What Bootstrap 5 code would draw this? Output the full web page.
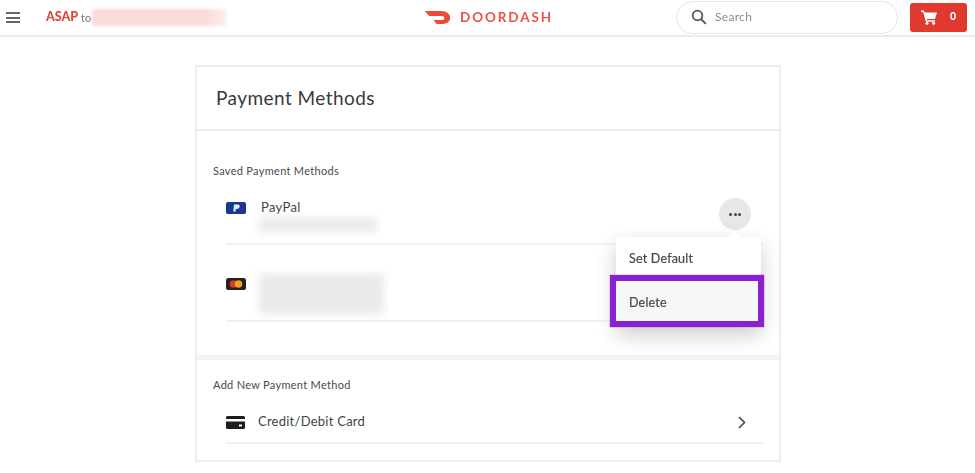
<!DOCTYPE html>
<html lang="en">
<head>
<meta charset="utf-8">
<title>Payment Methods</title>
<link rel="stylesheet" href="https://cdn.jsdelivr.net/npm/bootstrap@5.3.0/dist/css/bootstrap.min.css">
<style>
html,body{height:473px;overflow:hidden;background:#fff}
body{font-family:Lato,"Liberation Sans",sans-serif;color:#494949}
.topbar,.paycard{filter:blur(.4px)}
.topbar{height:37px;border-bottom:2px solid #ececec;padding:0 6px 0 6px}
.topbar>*{flex:none}
.burger{width:14px;height:11px;margin-right:26px;border-top:2px solid #666;border-bottom:2px solid #666;position:relative}
.burger::after{content:"";position:absolute;left:0;right:0;top:2.5px;height:2px;background:#666}
.asap{font-size:12.5px;font-weight:900;color:#e2443a;line-height:1}
.asap-to{font-size:11px;color:#777;margin:0 1px 0 3px;line-height:1}
.addr-blur{width:135px;height:17px;background:linear-gradient(90deg,#f9dcd9 85%,#fdf1ef);filter:blur(1.5px)}
.addr-wrap{width:378px}
.brand-wrap{width:253px}
.brand-name{font-size:13.5px;font-weight:700;letter-spacing:1.9px;color:#eb5146;margin-left:8px;line-height:1}
.searchbox{width:222px;height:33px;border:1px solid #e4e4e4;border-radius:17px;padding-left:14px;font-size:12px;color:#8b8b8b;letter-spacing:.3px;margin-left:-1px;margin-top:-1px}
.searchbox svg{margin-right:8px}
.cartbtn{width:57px;height:29px;margin-left:12px;border:0;border-radius:3px;background:#e0392f;color:#fff;font-size:10.5px;font-weight:900;padding:0 0 0 11px;margin-top:-1px}
.cartbtn span{margin-left:13px}
.paycard{width:586px;height:397px;margin:28px 0 0 195px;border:2px solid #eeeeee;border-radius:0;position:relative;background:#fff}
.ptitle{height:64px;padding:0 0 0 19px;font-size:19px;font-weight:400;letter-spacing:.45px;color:#3a3a3a;border-bottom:2px solid #eeeeee;margin:0}
.sect-label{font-size:11px;color:#4a4a4a;letter-spacing:.3px;line-height:1;margin:0 0 0 16px}
.saved{height:229px;padding-top:34px;border-bottom:5px solid #f3f3f3}
.pm-row{margin-left:29px;margin-right:16px;border-bottom:2px solid #f2f2f2;position:relative}
.pm-one{height:55px;margin-top:14px;padding-top:9px}
.pm-two{height:77px;padding-top:30px}
.cardicon{width:20px;height:12px;flex:none;border-radius:1.5px;margin-top:3px}
.pm-name{font-size:13px;letter-spacing:.35px;line-height:1;margin-left:15px;margin-top:2px;color:#444}
.blurbar{position:absolute;background:#e9e9e9;filter:blur(4px)}
.bb1{left:33px;top:28px;width:118px;height:14px}
.bb2{left:33px;top:29px;width:125px;height:40px}
.morebtn{position:absolute;right:12px;top:8px;width:32px;height:32px;border-radius:50%;background:#e7e7e7;border:0;padding:0;gap:1.5px}
.morebtn i{display:block;width:3px;height:3px;border-radius:50%;background:#444}
.add{padding-top:19px}
.addrow{margin:15px 16px 0 29px;height:39px;border-bottom:2px solid #f2f2f2;padding-bottom:3px;font-size:13px;color:#444;letter-spacing:.25px}
.addrow svg.cc{margin-right:13px}
.chev{margin-right:17px}
.pop-menu{position:absolute;left:419px;top:170px;width:145px;background:#fff;box-shadow:0 8px 20px rgba(0,0,0,.2);font-size:12.5px;letter-spacing:.2px;color:#484848;z-index:3}
.pop-menu::before{content:"";position:absolute;left:114px;top:-4px;width:9px;height:9px;background:#fff;transform:rotate(45deg)}
.pop-item{height:38px;padding-left:13px;padding-top:6px;-webkit-text-stroke:.2px #484848}
.pop-item.sel{height:52px;background:#f6f6f6;border:6px solid #8a20cf;margin:0 -3px 0 -6px;padding-top:4px;box-shadow:0 0 1px #8a20cf}
</style>
</head>
<body>
<header class="topbar d-flex align-items-center">
  <div class="burger"></div>
  <div class="addr-wrap d-flex align-items-center">
    <span class="asap">ASAP</span><span class="asap-to">to</span><div class="addr-blur"></div>
  </div>
  <div class="brand-wrap d-flex align-items-center">
    <svg width="28" height="15" viewBox="0 0 28 16"><path fill="#eb4a3d" d="M0 1h17c6 0 10 3 10 7.300S23 15 18 15h-5.500L9.200 10.700h9.200c1.300 0 2.300-.9 2.300-2 0-1.200-1-2.200-2.500-2.200H4.500z"/></svg>
    <span class="brand-name">DOORDASH</span>
  </div>
  <div class="searchbox d-flex align-items-center">
    <svg width="16" height="16" viewBox="0 0 16 16" fill="none" stroke="#555" stroke-width="1.800"><circle cx="6.500" cy="6.500" r="4.800"/><path d="M10 10l4.800 4.800"/></svg>Search
  </div>
  <button class="cartbtn d-flex align-items-center" type="button">
    <svg width="16" height="15" viewBox="0 0 16 15" fill="#fff"><path d="M0 .5h3l.6 2H16l-2 6.500H5.600l.4 1.300h8v1.400H4.900L2 2H0z"/><circle cx="6" cy="13.300" r="1.500"/><circle cx="12.600" cy="13.300" r="1.500"/></svg>
    <span>0</span>
  </button>
</header>
<main class="paycard">
  <h1 class="ptitle d-flex align-items-center">Payment Methods</h1>
  <section class="saved">
    <p class="sect-label">Saved Payment Methods</p>
    <div class="pm-row pm-one d-flex">
      <svg class="cardicon" viewBox="0 0 20 12"><rect width="20" height="12" rx="1.500" fill="#17388c"/><path fill="#dfe6f5" d="M8 2.500h4c1.500 0 2 1 1.600 2.400-.4 1.300-1.300 2-2.700 2h-1L9.500 9.500H7.300z"/></svg>
      <div class="pm-name">PayPal</div>
      <div class="blurbar bb1"></div>
      <button class="morebtn d-flex align-items-center justify-content-center" type="button" aria-label="More"><i></i><i></i><i></i></button>
    </div>
    <div class="pm-row pm-two d-flex">
      <svg class="cardicon" viewBox="0 0 20 12"><rect width="20" height="12" rx="2" fill="#222"/><circle cx="7.500" cy="6" r="3.800" fill="#e2352b"/><circle cx="12.500" cy="6" r="3.800" fill="#f59e20"/></svg>
      <div class="blurbar bb2"></div>
    </div>
  </section>
  <section class="add">
    <p class="sect-label">Add New Payment Method</p>
    <div class="addrow d-flex align-items-center">
      <svg class="cc" width="19" height="13" viewBox="0 0 19 13"><path fill="#1d1d1d" d="M1.500 0h16A1.500 1.500 0 0 1 19 1.500V3H0V1.500A1.500 1.500 0 0 1 1.500 0zM0 5.500h19v6a1.500 1.500 0 0 1-1.500 1.500h-16A1.500 1.500 0 0 1 0 11.500z"/><rect x="13" y="8.500" width="3" height="2" fill="#fff"/></svg>
      <span>Credit/Debit Card</span>
      <svg class="ms-auto chev" width="8" height="13" viewBox="0 0 8 13" fill="none" stroke="#444" stroke-width="1.600"><path d="M1 1l5.500 5.500L1 12"/></svg>
    </div>
  </section>
  <div class="pop-menu">
    <div class="pop-item d-flex align-items-center">Set Default</div>
    <div class="pop-item sel d-flex align-items-center">Delete</div>
  </div>
</main>
<script src="https://cdn.jsdelivr.net/npm/bootstrap@5.3.0/dist/js/bootstrap.bundle.min.js"></script>
</body>
</html>
